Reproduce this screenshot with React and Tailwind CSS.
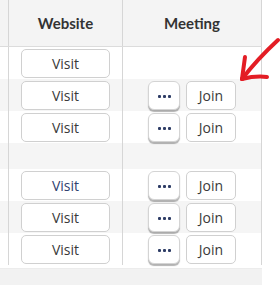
import React from "react";

const rows = [
  { visit: true, meeting: false, gray: false },
  { visit: true, meeting: true, gray: true },
  { visit: true, meeting: true, gray: false },
  { empty: true, gray: true },
  { visit: true, meeting: true, gray: false, blue: true },
  { visit: true, meeting: true, gray: true },
  { visit: true, meeting: true, gray: false },
];

function Dots() {
  return (
    <button className="w-[32px] h-[29px] rounded-md border border-[#d4d4d4] bg-white shadow-[0_2px_1px_rgba(0,0,0,0.3)] flex items-center justify-center gap-[2px] pt-[2px]">
      <span className="w-[3px] h-[3px] rounded-[1px] bg-[#2e3d66]" />
      <span className="w-[3px] h-[3px] rounded-[1px] bg-[#2e3d66]" />
      <span className="w-[3px] h-[3px] rounded-[1px] bg-[#2e3d66]" />
    </button>
  );
}

export default function App() {
  return (
    <div className="relative w-[280px] h-[285px] bg-white overflow-hidden" style={{ fontFamily: "'Open Sans', sans-serif" }}>
      <div className="w-[262px]">
        {/* header */}
        <div className="flex h-[47px] bg-[#f4f4f4] border-b border-[#dcdcdc] text-[15px] font-bold text-[#333]" style={{ fontFamily: "Lato, sans-serif" }}>
          <div className="w-[9px] border-r border-[#d6d6d6]" />
          <div className="w-[114px] border-r border-[#d6d6d6] flex items-center justify-center">Website</div>
          <div className="w-[139px] border-r border-[#d6d6d6] flex items-center justify-center">Meeting</div>
        </div>

        {rows.map((r, i) => (
          <div key={i} className={`flex ${r.empty ? "h-[26px]" : "h-[32px]"} ${r.gray ? "bg-[#f5f5f5]" : "bg-white"}`}>
            <div className="w-[9px] border-r border-[#d6d6d6]" />
            <div className="w-[114px] border-r border-[#d6d6d6] flex items-center justify-center">
              {r.visit && (
                <button className={`w-[89px] h-[29px] rounded-[5px] border border-[#d0d0d0] bg-white text-[14px] ${r.blue ? "text-[#2f4170]" : "text-[#3a3a3a]"}`}>
                  Visit
                </button>
              )}
            </div>
            <div className="w-[139px] border-r border-[#d6d6d6] flex items-center justify-center gap-[6px]">
              {r.meeting && (
                <>
                  <Dots />
                  <button className="w-[50px] h-[29px] rounded-[5px] border border-[#d0d0d0] bg-white text-[14px] text-[#3a3a3a]">
                    Join
                  </button>
                </>
              )}
            </div>
          </div>
        ))}

        <div className="mt-[3px] h-[17px] bg-[#f2f2f2] border-t border-[#ececec]" />
      </div>

      {/* red annotation arrow */}
      <svg className="absolute left-0 top-0" width="280" height="285" viewBox="0 0 280 285">
        <g stroke="#e31d25" strokeWidth="4" strokeLinecap="round" fill="none">
          <path d="M278 40 C 265 52, 252 66, 242 79" />
          <path d="M242 79 C 243 72, 244 64, 245 57" />
          <path d="M242 79 C 250 77, 259 76, 267 77" />
        </g>
      </svg>
    </div>
  );
}
